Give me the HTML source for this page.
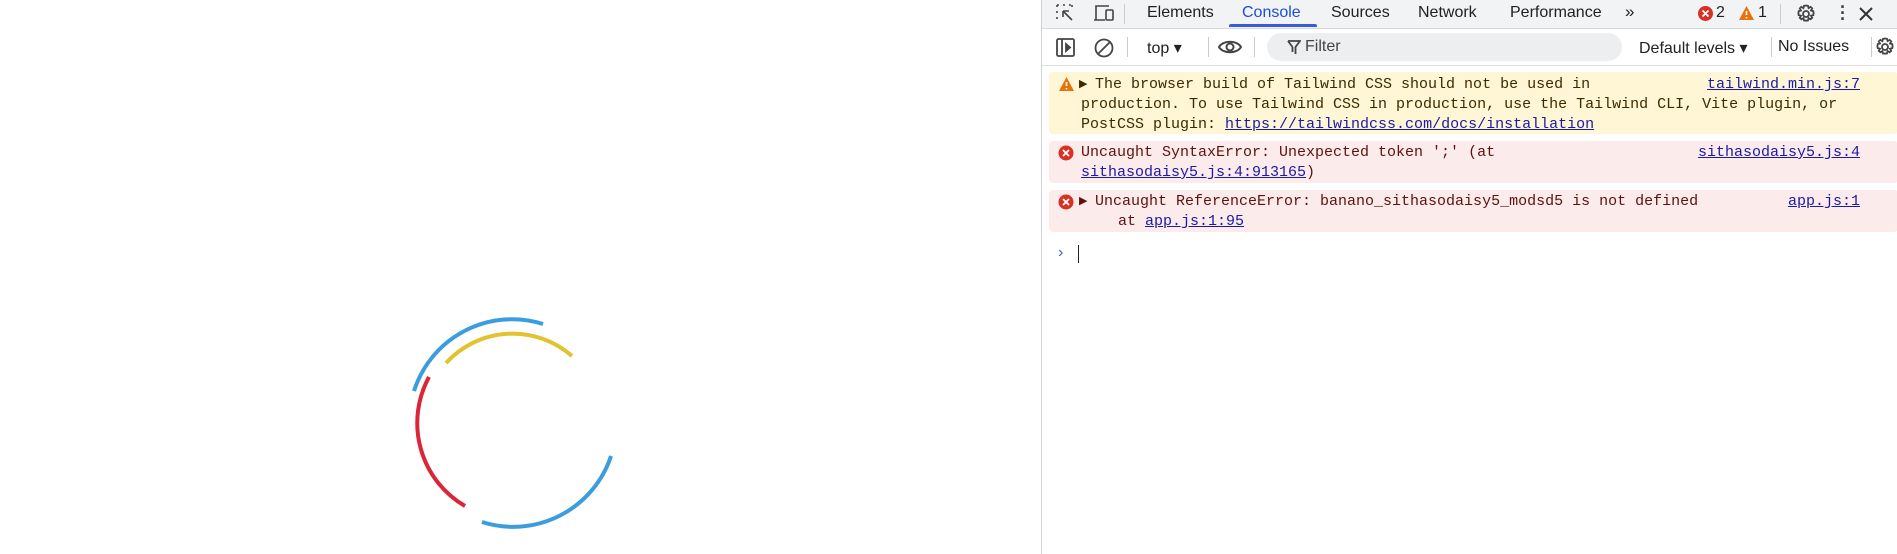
<!DOCTYPE html>
<html><head><style>
body{margin:0;width:1897px;height:554px;overflow:hidden;background:#fff;font-family:"Liberation Sans",sans-serif;position:relative}
.dt{position:absolute;left:1041px;top:0;width:856px;height:554px;border-left:1px solid #cfd2d6;background:#fff}
.tabs{position:absolute;left:0;top:0;width:856px;height:28px;background:#f1f3f4;border-bottom:1px solid #d6d8db}
.a{position:absolute;white-space:nowrap}
.tab{position:absolute;top:4px;font-size:16px;color:#202124}
.tb{position:absolute;top:29px;width:856px;height:36px;border-bottom:1px solid #e0e0e0}
.msg{position:absolute;left:7px;width:849px;font-family:"Liberation Mono",monospace;font-size:15px;line-height:20px;color:#3c2a00}
.msg .t{position:absolute;left:39px;white-space:pre}
.lnk{color:#1a1aa6;text-decoration:underline;text-decoration-color:#1a1aa6}
.src{position:absolute;right:38px;color:#1a1aa6;text-decoration:underline}
</style></head><body>
<svg class="a" style="left:0;top:0" width="1040" height="554">
<g fill="none" stroke-width="4" stroke-linecap="butt">
<path d="M543 324 A103 103 0 0 0 414 391" stroke="#3b9ddd"/>
<path d="M611 456 A103 103 0 0 1 482 522" stroke="#3b9ddd"/>
<path d="M446 363 A90 90 0 0 1 572 356" stroke="#e2c22e"/>
<path d="M429 377 A96 96 0 0 0 465 506" stroke="#db2637"/>
</g></svg>
<div class="dt">
<div class="tabs">
<svg class="a" style="left:13px;top:3px" width="22" height="22" fill="none" stroke="#444" stroke-width="1.6"><path d="M2 2h3M8 2h3M14 2h3M2 2v3M2 8v3M2 14v3M17 2v3" stroke-dasharray="2 1.5"/><path d="M8 8l9 9M8 8v6M8 8h6"/></svg>
<svg class="a" style="left:51px;top:3px" width="24" height="22" fill="none" stroke="#444" stroke-width="1.6"><path d="M3 17V3h13M1 17h11"/><rect x="13" y="7" width="7" height="10" rx="1"/></svg>
<div class="a" style="left:82px;top:4px;width:1px;height:20px;background:#ccc"></div>
<div class="tab" style="left:105px">Elements</div>
<div class="tab" style="left:200px;color:#1a4fd8">Console</div>
<div class="a" style="left:187px;top:24px;width:88px;height:3px;background:#3b5bdb;border-radius:2px 2px 0 0"></div>
<div class="tab" style="left:289px">Sources</div>
<div class="tab" style="left:376px">Network</div>
<div class="tab" style="left:468px">Performance</div>
<div class="tab" style="left:583px;font-size:17px;top:2px">»</div>
<svg class="a" style="left:655px;top:5px" width="17" height="17"><circle cx="8.5" cy="8.5" r="7.5" fill="#d93025"/><path d="M5.5 5.5l6 6M11.5 5.5l-6 6" stroke="#fff" stroke-width="1.8"/></svg>
<div class="tab" style="left:674px">2</div>
<svg class="a" style="left:696px;top:5px" width="17" height="16"><path d="M8.5 1L16 15H1z" fill="#e8710a"/><path d="M8.5 6v4M8.5 12v1.5" stroke="#fff" stroke-width="1.6"/></svg>
<div class="tab" style="left:716px">1</div>
<div class="a" style="left:738px;top:4px;width:1px;height:20px;background:#ccc"></div>
<svg class="a" style="left:753px;top:3px" width="22" height="22" fill="none" stroke="#444" stroke-width="1.8"><circle cx="11" cy="11" r="3"/><path d="M11 2.5l2 .3.6 2.3 2-1.2 1.6 1.5-1.2 2.1 2.3.6.3 2-.3 2-2.3.6 1.2 2.1-1.6 1.5-2-1.2-.6 2.3-2 .3-2-.3-.6-2.3-2 1.2-1.6-1.5 1.2-2.1-2.3-.6-.3-2 .3-2 2.3-.6-1.2-2.1L6.4 3.9l2 1.2.6-2.3z"/></svg>
<div class="a" style="left:798px;top:4px;font-size:18px;font-weight:bold;line-height:6px;color:#444">·<br>·<br>·</div>
<svg class="a" style="left:816px;top:6px" width="16" height="16" stroke="#333" stroke-width="2"><path d="M2 2l12 12M14 2L2 14"/></svg>
</div>
<div class="tb">
<svg class="a" style="left:13px;top:8px" width="22" height="22" fill="none" stroke="#444" stroke-width="1.8"><rect x="2" y="2" width="17" height="17" rx="1.5"/><path d="M7 2v17"/><path d="M11 7l4 3.5-4 3.5z" fill="#444"/></svg>
<svg class="a" style="left:51px;top:8px" width="22" height="22" fill="none" stroke="#444" stroke-width="1.8"><circle cx="11" cy="11" r="8.5"/><path d="M5 17L17 5"/></svg>
<div class="a" style="left:85px;top:8px;width:1px;height:20px;background:#ccc"></div>
<div class="a" style="left:105px;top:9px;font-size:16px;color:#202124">top ▾</div>
<div class="a" style="left:166px;top:8px;width:1px;height:20px;background:#ccc"></div>
<svg class="a" style="left:175px;top:8px" width="26" height="20" fill="none" stroke="#444" stroke-width="2"><path d="M2 10C6 3 20 3 24 10 20 17 6 17 2 10z"/><circle cx="13" cy="10" r="3.5"/></svg>
<div class="a" style="left:212px;top:8px;width:1px;height:20px;background:#ccc"></div>
<div class="a" style="left:225px;top:4px;width:355px;height:28px;border-radius:14px;background:#eceef0"></div>
<svg class="a" style="left:245px;top:11px" width="14" height="15" fill="none" stroke="#444" stroke-width="1.8"><path d="M1 1h12L8.5 7v7M5.5 7v5M1 1l4.5 6"/></svg>
<div class="a" style="left:263px;top:9px;font-size:16px;color:#444">Filter</div>
<div class="a" style="left:597px;top:9px;font-size:16px;color:#202124">Default levels ▾</div>
<div class="a" style="left:729px;top:8px;width:1px;height:20px;background:#ccc"></div>
<div class="a" style="left:736px;top:9px;font-size:16px;color:#202124">No Issues</div>
<div class="a" style="left:829px;top:8px;width:1px;height:20px;background:#ccc"></div>
<svg class="a" style="left:832px;top:7px" width="22" height="22" fill="none" stroke="#444" stroke-width="1.8"><circle cx="11" cy="11" r="3"/><path d="M11 2.5l2 .3.6 2.3 2-1.2 1.6 1.5-1.2 2.1 2.3.6.3 2-.3 2-2.3.6 1.2 2.1-1.6 1.5-2-1.2-.6 2.3-2 .3-2-.3-.6-2.3-2 1.2-1.6-1.5 1.2-2.1-2.3-.6-.3-2 .3-2 2.3-.6-1.2-2.1L6.4 3.9l2 1.2.6-2.3z"/></svg>
</div>
<div class="msg" style="top:72px;height:62px;background:#fef6d5;border-radius:4px">
<svg class="a" style="left:9px;top:4px" width="17" height="16"><path d="M8.5 1L16 15H1z" fill="#e8710a"/><path d="M8.5 6v4M8.5 12v1.5" stroke="#fff" stroke-width="1.6"/></svg>
<div class="a" style="left:30px;top:3px;font-size:11px">▶</div>
<div class="t" style="top:3px;left:46px">The browser build of Tailwind CSS should not be used in</div>
<div class="t" style="top:23px;left:32px">production. To use Tailwind CSS in production, use the Tailwind CLI, Vite plugin, or</div>
<div class="t" style="top:43px;left:32px">PostCSS plugin: <span class="lnk">https://tailwindcss.com/docs/installation</span></div>
<div class="src" style="top:3px">tailwind.min.js:7</div>
</div>
<div class="msg" style="top:141px;height:42px;background:#fcebeb;border-radius:4px;color:#5f1111">
<svg class="a" style="left:9px;top:4px" width="16" height="16"><circle cx="8" cy="8" r="7.5" fill="#d93025"/><path d="M5 5l6 6M11 5l-6 6" stroke="#fff" stroke-width="1.8"/></svg>
<div class="t" style="top:2px;left:32px">Uncaught SyntaxError: Unexpected token ';' (at</div>
<div class="t" style="top:22px;left:32px"><span class="lnk">sithasodaisy5.js:4:913165</span>)</div>
<div class="src" style="top:2px">sithasodaisy5.js:4</div>
</div>
<div class="msg" style="top:190px;height:42px;background:#fcebeb;border-radius:4px;color:#5f1111">
<svg class="a" style="left:9px;top:4px" width="16" height="16"><circle cx="8" cy="8" r="7.5" fill="#d93025"/><path d="M5 5l6 6M11 5l-6 6" stroke="#fff" stroke-width="1.8"/></svg>
<div class="a" style="left:30px;top:2px;font-size:11px">▶</div>
<div class="t" style="top:2px;left:46px">Uncaught ReferenceError: banano_sithasodaisy5_modsd5 is not defined</div>
<div class="t" style="top:22px;left:69px">at <span class="lnk">app.js:1:95</span></div>
<div class="src" style="top:2px">app.js:1</div>
</div>
<div class="a" style="left:16px;top:244px;font-size:16px;color:#3b5bdb">›</div>
<div class="a" style="left:36px;top:245px;width:1px;height:18px;background:#202124"></div>
</div>
</body></html>
